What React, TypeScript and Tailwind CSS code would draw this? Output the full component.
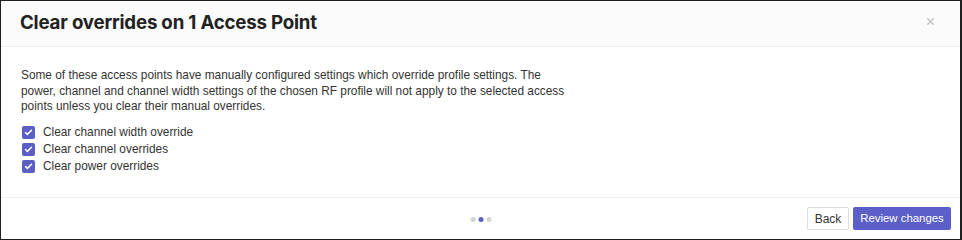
import { Check, X } from 'lucide-react'

const options = [
  'Clear channel width override',
  'Clear channel overrides',
  'Clear power overrides',
]

export default function App() {
  return (
    <div className="h-[240px] w-[962px] bg-white font-['Liberation_Sans',Arial,sans-serif]">
      <div className="flex h-full flex-col border border-r-2 border-[#1f1f1f] bg-white">
        {/* Header */}
        <div className="flex h-[46px] items-center justify-between border-b border-[#eeeeee] bg-[#fbfbfb] pl-[19px] pr-[24px]">
          <h1 className="font-['Inter',sans-serif] text-[18.7px] font-bold tracking-[-0.2px] text-[#222222]">
            Clear overrides on 1 Access Point
          </h1>
          <button className="-mt-[5px] text-[#c4c4c4]" aria-label="Close">
            <X size={11} strokeWidth={3.5} />
          </button>
        </div>

        {/* Body */}
        <div className="flex-1 px-[20px] pt-[21px]">
          <p className="w-[546px] text-[11.85px] leading-[15.5px] text-[#333333]">
            Some of these access points have manually configured settings which override profile
            settings. The power, channel and channel width settings of the chosen RF profile will
            not apply to the selected access points unless you clear their manual overrides.
          </p>
          <div className="mt-[11px] flex flex-col gap-[3px]">
            {options.map((label) => (
              <label key={label} className="flex h-[14px] items-center gap-[8px] pl-[1px]">
                <span className="flex h-[13px] w-[13px] items-center justify-center rounded-[2px] bg-[#5b5fc4] text-white">
                  <Check size={9} strokeWidth={4} />
                </span>
                <span className="text-[11.85px] text-[#333333]">{label}</span>
              </label>
            ))}
          </div>
        </div>

        {/* Footer */}
        <div className="relative flex h-[42px] items-center justify-end gap-[4px] border-t border-[#eeeeee] pr-[9px]">
          <div className="absolute left-1/2 top-[19px] flex -translate-x-1/2 gap-[3px]">
            <span className="h-[5px] w-[5px] rounded-full bg-[#d4d4d4]" />
            <span className="h-[5px] w-[5px] rounded-full bg-[#5b5fc4]" />
            <span className="h-[5px] w-[5px] rounded-full bg-[#d4d4d4]" />
          </div>
          <button className="h-[23px] w-[42px] rounded-[2px] border border-[#dddddd] bg-white text-[12px] text-[#333333]">
            Back
          </button>
          <button className="h-[23px] w-[98px] rounded-[2px] bg-[#5b5fc7] text-[11.4px] text-white">
            Review changes
          </button>
        </div>
      </div>
    </div>
  )
}
